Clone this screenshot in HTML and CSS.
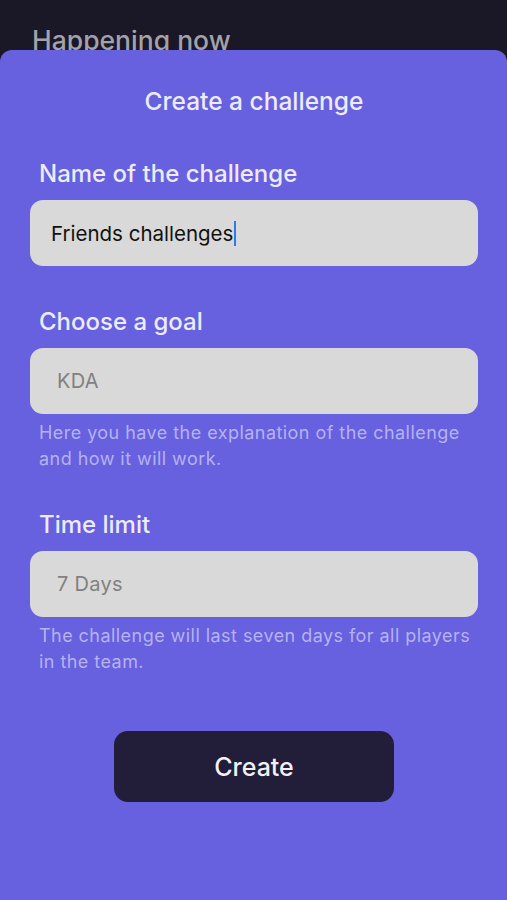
FILE: index.html
```html
<!DOCTYPE html>
<html lang="en">
<head>
  <meta charset="UTF-8" />
  <meta name="viewport" content="width=device-width, initial-scale=1.0"/>
  <title>Create a challenge</title>
  <link rel="stylesheet" href="styles.css">
</head>
<body>
  <header class="behind">
    <h2>Happening now</h2>
  </header>

  <div class="sheet">
    <h1 class="sheet-title">Create a challenge</h1>

    <form class="challenge-form">
      <div class="field">
        <label for="name">Name of the challenge</label>
        <div class="input-box">
          <span class="value">Friends challenges</span><span class="caret"></span>
        </div>
      </div>

      <div class="field">
        <label for="goal">Choose a goal</label>
        <div class="input-box placeholder">KDA</div>
        <p class="hint">Here you have the explanation of the challenge and how it will work.</p>
      </div>

      <div class="field">
        <label for="time">Time limit</label>
        <div class="input-box placeholder">7 Days</div>
        <p class="hint">The challenge will last seven days for all players in the team.</p>
      </div>

      <button type="button" class="create-btn">Create</button>
    </form>
  </div>
</body>
</html>
```

FILE: styles.css
```css
* {
  box-sizing: border-box;
}

body {
  margin: 0;
  background: #1a1726;
  font-family: Inter, 'Noto Sans', sans-serif;
  min-height: 100vh;
}

.behind {
  height: 50px;
  overflow: hidden;
  padding-left: 32px;
}

.behind h2 {
  margin: 0;
  padding-top: 25px;
  font-size: 26.5px;
  line-height: 30px;
  font-weight: 500;
  color: #a3a2ab;
}

.sheet {
  background: #6760df;
  border-radius: 12px 12px 0 0;
  min-height: 850px;
  padding: 36px 29px 0 30px;
}

.sheet-title {
  margin: 0;
  text-align: center;
  font-size: 24.5px;
  line-height: 30px;
  font-weight: 500;
  color: #ececf8;
}

.field {
  margin-top: 43px;
}

.field + .field {
  margin-top: 41px;
}

.field:last-of-type {
  margin-top: 38px;
}

label {
  display: block;
  padding-left: 9px;
  font-size: 24px;
  line-height: 30px;
  font-weight: 500;
  color: #ececf8;
}

.input-box {
  margin-top: 11px;
  height: 66px;
  background: #d9d9d9;
  border-radius: 13px;
  display: flex;
  align-items: center;
  padding-left: 21px;
  font-size: 20.5px;
  color: #111;
}

.input-box.placeholder {
  padding-left: 27px;
  font-size: 20px;
  letter-spacing: 0.3px;
  color: #818181;
}

.caret {
  display: inline-block;
  width: 2px;
  height: 25px;
  margin-left: 1px;
  background: #2b7bf0;
}

.hint {
  margin: 6px 0 0;
  padding-left: 9px;
  font-size: 18px;
  letter-spacing: 0.45px;
  line-height: 26px;
  color: #b5b3ef;
}

.create-btn {
  display: block;
  margin: 56px auto 0;
  width: 280px;
  height: 71px;
  background: #221d38;
  border: none;
  border-radius: 14px;
  color: #f2f2f6;
  font-family: inherit;
  font-size: 25px;
  font-weight: 500;
}
```
